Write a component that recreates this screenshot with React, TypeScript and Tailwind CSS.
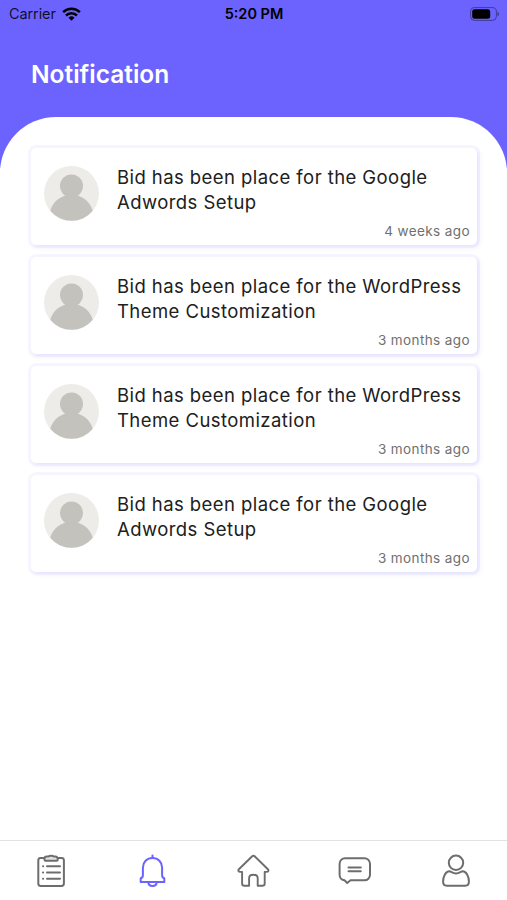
const notifications = [
  { id: 1, lines: ['Bid has been place for the Google', 'Adwords Setup'], time: '4 weeks ago' },
  { id: 2, lines: ['Bid has been place for the WordPress', 'Theme Customization'], time: '3 months ago' },
  { id: 3, lines: ['Bid has been place for the WordPress', 'Theme Customization'], time: '3 months ago' },
  { id: 4, lines: ['Bid has been place for the Google', 'Adwords Setup'], time: '3 months ago' },
]

function StatusBar() {
  return (
    <div className="grid h-7 grid-cols-3 items-center pr-2 pl-[9px] text-black">
      <div className="flex items-center gap-[6px]">
        <span className="text-[14.5px] leading-none tracking-[-0.1px] text-black/85">Carrier</span>
        <svg className="-mt-px" width="19" height="14" viewBox="0 0 19 14" fill="none" stroke="currentColor" strokeWidth="2.5">
          <path d="M1.1 5.2a12 12 0 0 1 16.8 0" />
          <path d="M4 8.5a7.8 7.8 0 0 1 11 0" />
          <path d="M9.5 13.7 6.5 10.8a4.3 4.3 0 0 1 6 0Z" fill="currentColor" stroke="none" />
        </svg>
      </div>
      <span className="text-center text-[14.5px] leading-none font-semibold whitespace-nowrap">5:20 PM</span>
      <svg className="-mt-px justify-self-end" width="29" height="14" viewBox="0 0 29 14">
        <rect x=".6" y=".6" width="25.8" height="12.8" rx="4" fill="none" stroke="#000" strokeOpacity=".4" />
        <rect x="2.2" y="2.2" width="18" height="9.6" rx="2.4" fill="#000" />
        <path d="M27.5 4.8c2 .8 2 3.6 0 4.4Z" fill="#000" fillOpacity=".45" />
      </svg>
    </div>
  )
}

function Avatar() {
  return (
    <svg className="size-[55px] shrink-0" viewBox="0 0 55 55">
      <circle cx="27.5" cy="27.5" r="27.5" fill="#eeece8" />
      <path d="M6.300 44.800C9 35 17 29 27.500 29S46 35 48.700 44.800a27.500 27.500 0 0 1-42.400 0Z" fill="#c4c2bd" />
      <circle cx="27.5" cy="20" r="11.5" fill="#c4c2bd" />
    </svg>
  )
}

function NotificationCard({ lines, time }: { lines: string[]; time: string }) {
  return (
    <div className="flex h-[97px] flex-col rounded-[5px] bg-white pr-[7px] pl-[13px] shadow-[0_0_0_3px_rgba(108,99,255,0.05),2px_2px_5px_rgba(108,99,255,0.15)]">
      <div className="flex gap-[18px] pt-[18px]">
        <Avatar />
        <div className="-mt-px text-[18.5px] leading-[24.5px] tracking-[0.43px] whitespace-nowrap text-[#202020]">
          {lines.map((line) => (
            <p key={line}>{line}</p>
          ))}
        </div>
      </div>
      <p className="mt-[2px] text-right text-[13.5px] leading-4 tracking-[0.4px] text-[#707070]">{time}</p>
    </div>
  )
}

function ListIcon() {
  return (
    <svg className="h-[34px] w-[34px]" viewBox="0 0 34 34" fill="none" stroke="currentColor" strokeWidth="2" strokeLinecap="round">
      <path d="M10.5 4H6.7a2.400 2.400 0 0 0-2.400 2.400v23.200a2.400 2.400 0 0 0 2.400 2.400h20.800a2.400 2.400 0 0 0 2.400-2.400V6.400A2.400 2.400 0 0 0 27.500 4h-3.800" />
      <path d="M12.800 2.500h1.700c.5-.7 1.100-.8 2.600-.8s2.100.1 2.600.8h1.700a2.300 2.300 0 0 1 2.300 2.300v.9a1 1 0 0 1-1 1H11.500a1 1 0 0 1-1-1v-.9a2.300 2.300 0 0 1 2.300-2.300Z" fill="#e2e2e2" />
      <path d="M13 12.300h13M13 18.500h13M13 24.700h13M9 12.300h.2M9 18.500h.2M9 24.700h.2" />
    </svg>
  )
}

function BellIcon() {
  return (
    <svg className="h-[34px] w-[34px]" viewBox="0 0 34 34" fill="none" stroke="currentColor" strokeWidth="2" strokeLinecap="round" strokeLinejoin="round">
      <path d="M17.500 1.500v2.300" />
      <path d="M17.500 3.900c-5.600 0-9.600 4.200-9.600 9.600v7.800c0 1.700-.5 2.600-2.200 2.900v3.700h23.600v-3.700c-1.700-.3-2.200-1.200-2.200-2.900v-7.800c0-5.400-4-9.600-9.600-9.600Z" />
      <path d="M13.300 28.300c.2 2.400 1.900 3.600 4.200 3.600s4-1.200 4.200-3.600" />
    </svg>
  )
}

function HomeIcon() {
  return (
    <svg className="h-[34px] w-[34px]" viewBox="0 0 34 34" fill="none" stroke="currentColor" strokeWidth="1.9" strokeLinejoin="round">
      <path d="M16.200 2.200 2.900 15.200c-1.100 1.200-.4 2.700 1.300 2.700h1.900v11.600c0 1.400.9 2.300 2.300 2.300h4.700v-7.600c0-2.100 1.300-3.400 4.300-3.400s4.300 1.300 4.300 3.400v7.600h4.700c1.400 0 2.300-.9 2.300-2.300V17.900h1.900c1.700 0 2.400-1.500 1.300-2.700L18.600 2.200c-.7-.7-1.700-.7-2.400 0Z" />
    </svg>
  )
}

function ChatIcon() {
  return (
    <svg className="h-[34px] w-[34px]" viewBox="0 0 34 34" fill="none" stroke="currentColor" strokeWidth="2" strokeLinecap="round" strokeLinejoin="round">
      <path d="M7 4.300h19.500a5.500 5.500 0 0 1 5.500 5.500v11a5.500 5.500 0 0 1-5.500 5.500H12.500l-3.300 2.700L6.500 26.200a5.300 5.300 0 0 1-4.900-5.400v-11A5.400 5.400 0 0 1 7 4.300Z" />
      <path d="M10.500 13.500h12.300M10.500 17.200h12.300" />
    </svg>
  )
}

function UserIcon() {
  return (
    <svg className="h-[34px] w-[34px]" viewBox="0 0 34 34" fill="none" stroke="currentColor" strokeWidth="2" strokeLinejoin="round">
      <circle cx="17" cy="8.800" r="7.200" />
      <path d="M10.300 17.200c1.800 0 3.300 2.200 6.700 2.200s4.900-2.200 6.700-2.200c3.500 0 6.200 5.300 6.200 10.300 0 3-1.300 4.200-3.600 4.200H7.700c-2.300 0-3.600-1.200-3.600-4.200 0-5 2.700-10.300 6.200-10.300Z" />
    </svg>
  )
}

function TabBar() {
  return (
    <nav className="grid h-[60px] grid-cols-5 items-start justify-items-center border-t border-[#e2e2e2] bg-white pt-[13px] text-[#6d6d6d]">
      <button aria-label="Orders"><ListIcon /></button>
      <button aria-label="Notifications" className="text-[#6c63ff]"><BellIcon /></button>
      <button aria-label="Home"><HomeIcon /></button>
      <button aria-label="Messages"><ChatIcon /></button>
      <button aria-label="Profile"><UserIcon /></button>
    </nav>
  )
}

export default function App() {
  return (
    <div className="flex h-[900px] w-[507px] flex-col overflow-hidden bg-[linear-gradient(#6c63ff_168px,#fff_168px)] font-['Inter',sans-serif]">
      <StatusBar />
      <header className="h-[89px] pt-[30px] pl-[31px]">
        <h1 className="text-[24.5px] leading-8 font-semibold text-white">Notification</h1>
      </header>
      <main className="flex flex-1 flex-col gap-3 rounded-t-[56px] bg-white pt-[31px] pr-[30px] pl-[31px]">
        {notifications.map((item) => (
          <NotificationCard key={item.id} lines={item.lines} time={item.time} />
        ))}
      </main>
      <TabBar />
    </div>
  )
}
